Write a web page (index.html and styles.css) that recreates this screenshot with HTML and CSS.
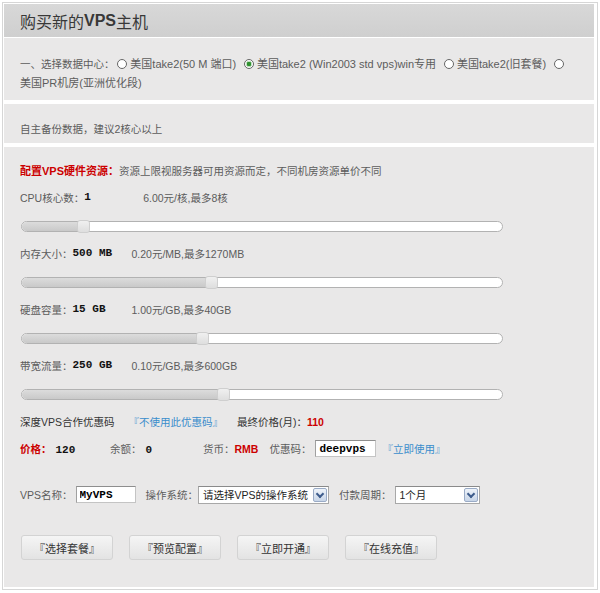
FILE: index.html
```html
<!DOCTYPE html>
<html lang="zh-CN">
<head>
    <meta charset="UTF-8">
    <title>购买新的VPS主机</title>
    <link rel="stylesheet" href="styles.css">
</head>
<body>

    <div class="frame">
        <div class="head">购买新的<b>VPS</b>主机</div>

        <div class="section dc">
            一、选择数据中心：
            <span class="radio"></span>
            <span class="opt">美国take2(50 M 端口)</span>
            <span class="radio on"></span>
            <span class="opt">美国take2 (Win2003 std vps)win专用</span>
            <span class="radio"></span>
            <span class="opt">美国take2(旧套餐)</span>
            <span class="radio"></span>
            <span class="opt">美国PR机房(亚洲优化段)</span>
        </div>

        <div class="section note">自主备份数据，建议2核心以上</div>

        <div class="section config">
            <div class="row title"><b class="red">配置VPS硬件资源：</b>资源上限视服务器可用资源而定，不同机房资源单价不同</div>

            <div class="row">CPU核心数：<span class="val">1</span><span>6.00元/核,最多8核</span></div>
            <div class="slider"><div class="fill" style="width: 12.9%"></div><span class="handle" style="left: 12.9%"></span></div>

            <div class="row">内存大小：<span class="val">500 MB</span><span>0.20元/MB,最多1270MB</span></div>
            <div class="slider"><div class="fill" style="width: 39.6%"></div><span class="handle" style="left: 39.6%"></span></div>

            <div class="row">硬盘容量：<span class="val">15 GB</span><span>1.00元/GB,最多40GB</span></div>
            <div class="slider"><div class="fill" style="width: 37.8%"></div><span class="handle" style="left: 37.8%"></span></div>

            <div class="row">带宽流量：<span class="val">250 GB</span><span>0.10元/GB,最多600GB</span></div>
            <div class="slider"><div class="fill" style="width: 42.1%"></div><span class="handle" style="left: 42.1%"></span></div>

            <div class="row coupon">
                <span class="dark">深度VPS合作优惠码</span>
                <a href="#" class="link">『不使用此优惠码』</a>
                <span class="dark">最终价格(月)：<b class="red num">110</b></span>
            </div>

            <div class="row price">
                <span class="cell-price"><b class="red">价格：</b><span class="mono">120</span></span>
                <span class="cell-balance">余额：<span class="mono">0</span></span>
                <span class="cell-currency">货币：<b class="red num">RMB</b></span>
                <span>优惠码：</span>
                <input type="text" class="field code" value="deepvps">
                <a href="#" class="link">『立即使用』</a>
            </div>

            <div class="row order">
                <span>VPS名称：</span>
                <input type="text" class="field name" value="MyVPS">
                <span class="gap">操作系统：</span>
                <div class="select os"><span>请选择VPS的操作系统</span><span class="arrow"></span></div>
                <span class="gap">付款周期：</span>
                <div class="select period"><span>1个月</span><span class="arrow"></span></div>
            </div>

            <div class="buttons">
                <button class="btn">『选择套餐』</button>
                <button class="btn">『预览配置』</button>
                <button class="btn">『立即开通』</button>
                <button class="btn">『在线充值』</button>
            </div>
        </div>
    </div>

</body>
</html>
```

FILE: styles.css
```css
* {
    box-sizing: border-box;
}

body {
    margin: 0;
    background: #fff;
    color: #5c5c5c;
    font-family: "Liberation Sans", "Noto Sans CJK SC", sans-serif;
    font-size: 10.5px;
}

.frame {
    margin: 2px 2px 1px;
    border: 1px solid #d6d6d6;
    padding: 1px 3px 2px 1px;
}

.head {
    height: 33px;
    display: flex;
    align-items: center;
    padding-left: 16px;
    margin-bottom: 1px;
    background: linear-gradient(#d8d8d8, #cfcfcf);
    color: #383838;
    font-size: 16px;
}

.head b {
    font-weight: bold;
}

.section {
    background: #e9e8e8;
}

.dc {
    height: 62px;
    padding: 17px 16px 6px;
    line-height: 19px;
}

.radio {
    display: inline-block;
    width: 10px;
    height: 10px;
    border: 1px solid #666;
    border-radius: 50%;
    background: #fff;
    vertical-align: -1px;
}

.radio.on {
    background: radial-gradient(circle, #2f8f2f 0 2px, #bfe0bf 2.5px 3px, #fff 3.5px);
}

.opt {
    white-space: nowrap;
    margin-right: 5px;
    font-size: 11px;
}

.note {
    margin-top: 4px;
    padding: 16px 16px 5px;
    line-height: 18px;
}

.config {
    margin-top: 4px;
    padding: 14px 16px 27px;
}

.row {
    display: flex;
    align-items: center;
    height: 18px;
    white-space: nowrap;
}

.title {
    margin-bottom: 9px;
}

.title .red {
    font-size: 11px;
}

.red {
    color: #c00;
    font-weight: bold;
}

.val {
    width: 59px;
    color: #111;
    font-family: "Liberation Mono", monospace;
    font-size: 11px;
    font-weight: bold;
}

.slider {
    position: relative;
    width: 482px;
    height: 11px;
    margin: 15px 0 12px 1px;
    border: 1px solid #b2b2b2;
    border-radius: 6px;
    background: #fff;
}

.fill {
    height: 100%;
    border-radius: 5px 0 0 5px;
    background: linear-gradient(#dcdcdc, #c9c9c9);
}

.handle {
    position: absolute;
    top: -2px;
    width: 13px;
    height: 13px;
    margin-left: -7px;
    border: 1px solid #cfcfcf;
    border-radius: 3px;
    background: linear-gradient(#f0f0f0, #dedede);
}

.dark {
    color: #333;
}

.num {
    font-family: "Liberation Sans", sans-serif;
}

.link {
    color: #3a8dcc;
    text-decoration: none;
}

.coupon .link {
    margin: 0 14px 0 14px;
}

.price {
    height: 19px;
    margin-top: 9px;
}

.mono {
    margin-left: 4px;
    color: #111;
    font-family: "Liberation Mono", monospace;
    font-size: 11px;
    font-weight: bold;
}

.cell-price {
    width: 90px;
}

.cell-balance {
    width: 93px;
}

.cell-currency {
    margin-right: 11px;
}

.field {
    height: 17px;
    padding: 0 3px;
    border: 1px solid #c4c4c4;
    border-top-color: #8e8e8e;
    border-left-color: #a0a0a0;
    background: #fff;
    color: #000;
    font-family: "Liberation Mono", monospace;
    font-size: 11px;
    font-weight: bold;
}

.code {
    width: 61px;
    margin: 0 6px 0 4px;
}

.name {
    width: 60px;
    margin-left: 3px;
}

.order {
    height: 19px;
    margin-top: 27px;
}

.gap {
    margin-left: 10px;
}

.select {
    display: flex;
    align-items: center;
    justify-content: space-between;
    height: 18px;
    padding: 0 1px 0 4px;
    border: 1px solid #a8a8a8;
    border-top-color: #8a8a8a;
    background: #fff;
    color: #222;
}

.os {
    width: 131px;
}

.period {
    width: 85px;
    margin-left: 3px;
}

.arrow {
    position: relative;
    width: 14px;
    height: 14px;
    border: 1px solid #9aabc6;
    border-radius: 2px;
    background: linear-gradient(#eef3fa, #c8d5e8);
}

.arrow::after {
    content: "";
    position: absolute;
    left: 3px;
    top: 2px;
    width: 4px;
    height: 4px;
    border-right: 2px solid #3d5c8c;
    border-bottom: 2px solid #3d5c8c;
    transform: rotate(45deg);
}

.buttons {
    display: flex;
    gap: 16px;
    margin: 31px 0 0 1px;
}

.btn {
    width: 92px;
    height: 25px;
    border: 1px solid #d3d3d3;
    border-radius: 3px;
    background: linear-gradient(#f5f5f5, #e3e3e3);
    color: #333;
    font-family: "Liberation Sans", "Noto Sans CJK SC", sans-serif;
    font-size: 11px;
    cursor: pointer;
}
```
